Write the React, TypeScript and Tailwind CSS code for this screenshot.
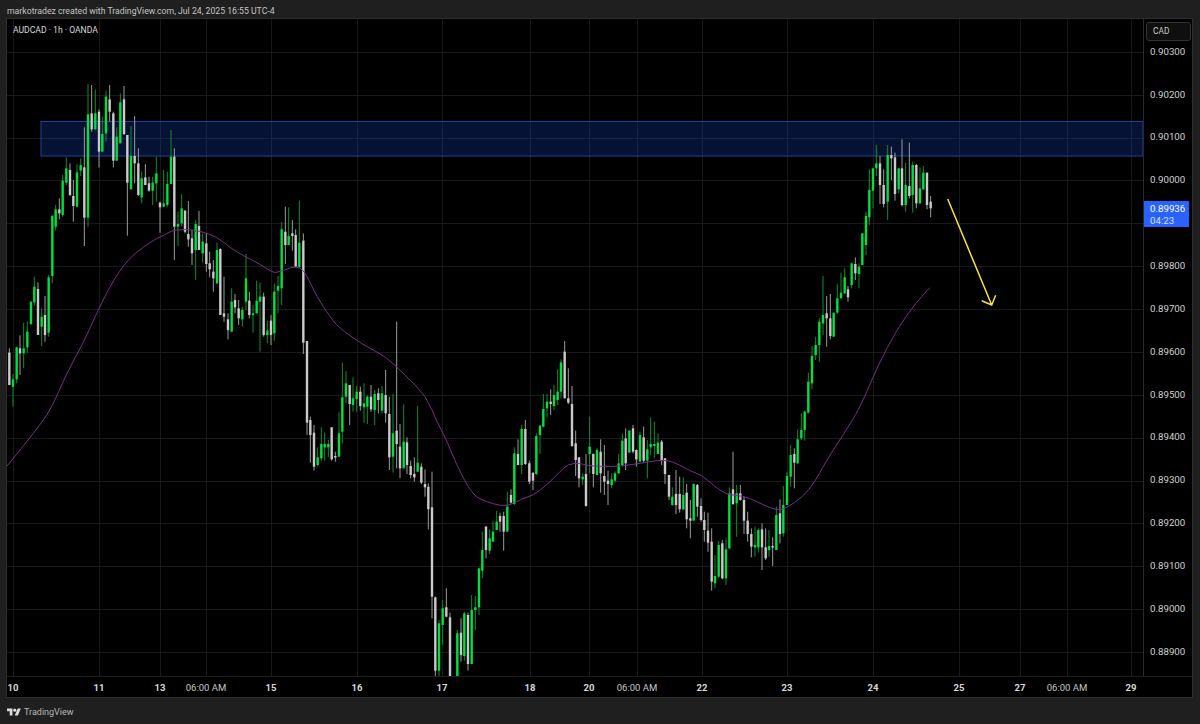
type Row = [number, number, number, number, number, number];

// candles read off the chart: x, green(1)/grey(0), high, body top, body bottom, low
// each block uses crop coordinates, scaled 3x from the given origin
const blocks: { ox: number; oy: number; rows: Row[] }[] = [
  {
    ox: 0,
    oy: 70,
    rows: [
      [28,0,835,848,945,945],[39,1,912,928,950,1010],[50,1,830,832,928,940],[60,0,796,835,850,915],[71,1,758,835,850,895],
      [82,1,755,785,832,850],[93,1,695,695,762,765],[103,1,620,650,697,707],[114,0,637,657,795,795],[125,1,715,740,770,828],
      [135,0,678,735,795,815],[146,1,615,622,788,800],[157,1,437,437,618,640],[167,1,405,418,470,482],[178,0,385,418,430,448],
      [188,1,315,332,435,440],[199,1,262,295,338,345],[210,0,280,300,375,378],[220,0,330,378,408,455],[231,1,283,307,410,410],
      [242,1,265,285,302,318],[253,0,172,292,443,528],[264,1,42,133,443,470],[275,0,45,130,178,185],[286,1,58,130,178,180],
      [297,0,118,125,245,292],[307,1,140,192,245,245],[318,1,62,80,190,215],[329,0,45,88,125,155],[340,0,125,130,272,292],
      [350,1,172,200,272,272],[361,1,70,97,220,220],[372,0,48,88,192,195],[382,0,195,195,338,497],[393,1,168,258,358,358],
      [404,0,138,258,280,340],[415,0,235,280,375,378],[425,1,305,325,382,400],[436,0,282,322,345,345],[447,0,320,340,362,365],
      [458,1,320,338,362,405],[469,1,260,310,340,395],[480,0,395,398,412,488],[491,1,300,400,410,410],[502,1,305,342,405,410],
      [513,1,180,260,342,342],[523,0,235,260,470,570],[534,1,425,462,470,528],[545,1,373,415,460,470],[555,0,420,422,485,490],
      [565,0,393,492,508,530],[576,0,480,505,550,585],[587,1,450,462,540,630],[597,0,423,468,540,540],[608,1,490,515,550,578],
      [619,0,490,520,582,605],[629,0,545,580,598,622],[640,0,570,605,625,665],[651,1,518,540,640,642],[661,0,535,537,735,735],
      [672,0,620,730,740,755],[684,0,730,748,780,808],[695,1,655,695,785,785],[705,0,672,690,712,730],[716,0,690,715,745,765],
      [727,1,710,720,748,770],[738,1,552,625,695,720],[748,0,665,692,735,745],[759,1,705,730,735,788],[770,1,632,692,730,730],
      [780,1,638,680,695,845],[791,0,668,680,795,800],[802,1,752,782,795,820],[813,0,735,752,795,825],[823,1,640,665,790,812],
      [834,1,618,648,662,730],[845,1,455,478,655,705],[856,0,410,485,525,582],[866,1,412,498,525,525],[877,0,450,490,498,542],
      [887,0,478,495,590,592],[898,1,392,518,592,592],[910,0,490,512,818,852],
    ],
  },
  {
    ox: 280,
    oy: 200,
    rows: [
      [81,0,423,423,668,705],[91,0,650,660,705,788],[102,0,675,698,800,812],[113,1,742,772,795,800],[124,1,682,732,775,782],
      [134,1,698,732,742,782],[145,1,720,732,742,772],[155,0,682,682,778,782],[166,0,755,768,772,785],[177,1,637,700,770,770],
      [187,1,488,592,695,730],[198,1,513,550,590,610],[209,0,555,555,612,675],[219,1,532,595,615,635],[230,1,558,575,597,635],
      [241,0,560,575,618,632],[252,1,550,610,622,668],[262,1,585,590,620,672],[273,0,555,590,628,635],[284,1,570,582,630,675],
      [295,0,565,580,600,640],[306,1,558,580,632,640],[317,0,510,585,640,668],[328,0,590,642,772,810],[339,1,582,700,770,818],
      [350,0,365,692,732,805],[360,0,672,740,805,835],[371,1,613,725,805,805],[381,0,712,727,795,822],[392,0,782,798,825,835],
      [403,0,772,822,832,845],[413,1,618,788,815,815],[424,0,790,800,848,852],[435,0,808,852,862,890],[445,0,850,860,928,988],
      [456,0,815,922,1190,1255],[466,0,1190,1192,1412,1428],[477,1,1260,1270,1412,1430],[488,1,1200,1225,1275,1335],[499,0,1165,1222,1250,1252],
      [510,0,1238,1252,1430,1430],[532,1,1290,1300,1430,1430],[543,0,1255,1298,1365,1385],[553,1,1235,1240,1368,1382],[564,0,1238,1245,1392,1412],
      [575,1,1185,1230,1392,1392],[586,1,1188,1222,1230,1290],[597,1,1105,1105,1222,1245],
    ],
  },
  {
    ox: 480,
    oy: 330,
    rows: [
      [7,1,605,660,722,745],[18,0,588,590,660,685],[29,1,598,625,662,672],[39,1,572,605,635,635],[50,1,542,575,600,600],
      [60,0,548,558,575,605],[71,0,545,558,605,662],[82,1,485,530,605,605],[93,0,478,495,518,520],[103,1,352,370,522,525],
      [114,0,328,372,405,405],[125,1,285,297,405,432],[136,0,270,297,402,405],[148,0,392,400,455,462],[159,0,428,428,452,480],
      [169,1,310,318,432,435],[180,1,285,287,315,372],[190,1,192,237,290,292],[201,1,192,215,235,262],[212,0,178,215,222,255],
      [222,1,165,195,228,240],[233,1,118,185,210,225],[243,1,88,97,185,205],[254,0,33,65,205,205],[265,0,115,205,218,222],
      [276,0,168,222,348,350],[287,0,302,340,390,438],[297,0,382,382,445,472],[308,1,430,440,448,465],[318,0,372,432,528,530],
      [329,1,260,350,372,430],[340,0,370,372,432,472],[351,1,355,360,435,435],[362,0,328,365,430,488],[373,0,345,438,455,495],
      [384,0,422,452,462,525],[395,1,430,448,465,475],[405,1,425,430,452,458],[416,1,372,400,430,432],[427,1,310,332,405,410],
      [437,0,295,325,400,420],[448,1,300,302,368,368],[459,0,285,295,365,370],[469,0,358,360,388,410],[480,1,305,315,395,395],
      [491,0,290,322,392,398],[502,1,330,358,392,445],[512,1,262,342,352,375],[523,1,275,342,348,385],[534,1,310,338,372,372],
      [545,0,330,335,390,405],[555,0,385,385,432,462],[567,0,435,435,500,510],[577,1,472,500,525,527],[588,0,420,492,525,552],
      [599,0,440,492,538,548],[610,1,442,495,538,540],[620,0,462,488,568,595],[631,0,510,565,572,625],[641,1,460,462,572,572],
      [652,0,462,465,530,560],[663,0,505,528,570,575],[673,0,545,570,600,635],[684,0,548,602,638,665],[695,0,595,635,755,782],
      [705,1,675,738,760,775],[716,1,632,645,740,745],[727,0,630,640,745,748],[738,1,625,658,745,765],[748,1,472,490,655,658],
      [759,0,365,478,522,525],[770,1,465,490,520,620],[781,0,465,490,510,512],[792,0,500,510,572,612],[803,0,545,572,612,635],
      [814,0,595,612,650,682],[825,1,590,645,652,680],[835,1,595,600,652,668],[846,0,580,598,652,720],[857,0,595,652,685,690],
      [867,1,600,648,660,680],[878,0,622,648,650,708],[889,1,530,555,660,660],[900,0,508,550,612,640],[910,1,468,525,610,620],
      [921,1,425,438,525,525],[932,1,345,375,440,470],[943,0,355,372,398,475],[953,1,298,328,400,402],
    ],
  },
  {
    ox: 760,
    oy: 220,
    rows: [
      [124,1,580,630,655,660],[134,1,572,575,630,662],[145,1,458,485,578,580],[156,1,378,408,490,508],[167,1,350,375,405,420],
      [178,1,295,305,375,425],[189,1,168,285,310,345],[200,0,228,280,295,380],[211,0,222,295,348,358],[221,1,278,278,350,350],
      [232,1,193,235,278,282],[243,1,158,218,235,235],[254,1,145,172,220,222],[264,0,198,208,232,245],[275,1,128,130,195,205],
      [286,0,112,132,160,180],[297,1,130,140,162,205],[307,1,40,40,135,135],
    ],
  },
  {
    ox: 860,
    oy: 130,
    rows: [
      [18,1,245,258,345,375],[28,1,118,180,262,285],[39,1,115,115,182,235],[49,1,45,100,115,138],[60,0,78,100,165,222],
      [71,0,118,165,222,232],[83,1,45,75,215,270],[94,0,50,75,85,150],[105,0,68,82,192,212],[116,1,115,115,178,190],
      [126,0,28,115,225,230],[137,1,98,165,225,245],[148,0,38,168,198,205],[158,1,95,105,195,248],[169,0,102,105,220,235],
      [180,1,112,175,220,222],[190,1,108,128,178,180],[201,0,128,128,225,238],[212,0,198,215,235,262],
    ],
  },
];

const maPoints: [number, number][] = [
  [7,466],[20,450],[36,430],[50.7,410],[66.7,373],[84,341.7],[95,316.7],[109,288],[122.7,266],[135,253],[155,239],[165,235],
  [171,230.7],[185,229],[200,231],[216.7,236.7],[230,247.7],[245,256.7],[260,264],[271.7,272],[277,272.7],[291.7,267],[300,267],
  [306.7,275],[316.7,296.7],[330,316.7],[338,327],[363,345],[385,355.7],[405,375],[426.7,396.7],[436.7,421.7],[445,436.7],
  [456.7,465],[468,486.7],[475,495.7],[480,499],[493,504],[508,506.7],[523,498],[533,495.7],[546.7,485],[560,471.7],[568,464],
  [580,463],[586.7,465.7],[613,467],[636.7,464],[665,459],[680,465],[690,471],[701.7,475],[713,485],[726.7,495],[743,495.7],
  [756.7,501.7],[775,510],[785,509],[803,496.7],[815,481.7],[825,463],[843,435],[860,408],[878,365],[896.7,330],[913,306.7],
  [925,292.7],[930,287.7],
];

// rounds the corners of the moving average
function smoothPath(pts: [number, number][]) {
  let d = `M${pts[0][0]} ${pts[0][1]}`;
  for (let i = 1; i < pts.length - 1; i++) {
    const mx = (pts[i][0] + pts[i + 1][0]) / 2;
    const my = (pts[i][1] + pts[i + 1][1]) / 2;
    d += `Q${pts[i][0]} ${pts[i][1]} ${mx} ${my}`;
  }
  const last = pts[pts.length - 1];
  return `${d}L${last[0]} ${last[1]}`;
}

const gridY = [52, 95, 138, 180, 223, 266, 309, 352, 395, 438, 481, 523, 566, 609, 652];
const gridX = [13, 99, 160, 206, 271, 357, 442, 530, 589, 637, 702, 787, 873, 959, 1020, 1067, 1131];

const prices = ["0.90300", "0.90200", "0.90100", "0.90000", "", "0.89800", "0.89700", "0.89600", "0.89500", "0.89400", "0.89300", "0.89200", "0.89100", "0.89000", "0.88900"];

const times = [
  { x: 13, t: "10", bold: true },
  { x: 99, t: "11", bold: true },
  { x: 160, t: "13", bold: true },
  { x: 206, t: "06:00 AM", bold: false },
  { x: 271, t: "15", bold: true },
  { x: 357, t: "16", bold: true },
  { x: 442, t: "17", bold: true },
  { x: 530, t: "18", bold: true },
  { x: 589, t: "20", bold: true },
  { x: 637, t: "06:00 AM", bold: false },
  { x: 702, t: "22", bold: true },
  { x: 787, t: "23", bold: true },
  { x: 873, t: "24", bold: true },
  { x: 959, t: "25", bold: true },
  { x: 1020, t: "27", bold: true },
  { x: 1067, t: "06:00 AM", bold: false },
  { x: 1131, t: "29", bold: true },
];

function Candles() {
  return (
    <>
      {blocks.flatMap((b) =>
        b.rows.map((r) => {
          const x = b.ox + r[0] / 3;
          const [hi, top, bot, lo] = [r[2], r[3], r[4], r[5]].map((v) => b.oy + v / 3);
          return (
            <g key={`${b.ox}-${r[0]}`}>
              <rect x={x - 0.5} y={hi} width={1} height={lo - hi} fill={r[1] ? "#0b8f2e" : "#9c9c9c"} />
              <rect x={x - 1.2} y={top} width={2.4} height={Math.max(bot - top, 1.5)} fill={r[1] ? "#00e040" : "#cacaca"} />
            </g>
          );
        })
      )}
    </>
  );
}

function ChartSvg() {
  return (
    <svg viewBox="7 19 1136 657" className="block w-[1136px] h-[657px] bg-black">
      {gridY.map((y) => (
        <line key={y} x1={7} x2={1143} y1={y + 0.5} y2={y + 0.5} stroke="#191919" />
      ))}
      {gridX.map((x) => (
        <line key={x} x1={x + 0.5} x2={x + 0.5} y1={19} y2={676} stroke="#191919" />
      ))}
      <rect x={41} y={121.5} width={1102} height={34.5} fill="#0f3aa8" fillOpacity={0.3} stroke="#1f429c" />
      <Candles />
      <path d={smoothPath(maPoints)} fill="none" stroke="#7a2d8c" strokeWidth={1} />
      <path d="M947.7 199L991.7 305M981.7 300.7L991.7 305L995.7 295.3" fill="none" stroke="#f5e43a" strokeWidth={1.5} />
    </svg>
  );
}

function TvLogo() {
  return (
    <svg viewBox="0 0 36 28" className="w-[14px] h-[11px]" fill="#dcdcdc">
      <path d="M14 22H7V11H0V4h14v18zM28 22h-8l7.5-18h8L28 22z" />
      <circle cx="20" cy="8" r="4" />
    </svg>
  );
}

export default function App() {
  return (
    <div className="w-[1200px] h-[724px] overflow-hidden bg-[#1f1f1f] text-[#d1d1d1] font-['Roboto',sans-serif]">
      <div className="h-[18px] pl-[7px] text-[8.7px] leading-[22px] text-[#c4c4c4] whitespace-nowrap">
        markotradez created with TradingView.com, Jul 24, 2025 16:55 UTC-4
      </div>

      <div className="ml-[6px] w-[1187px] h-[680px] border border-[#2e2e2e] bg-black">
        <div className="flex h-[657px]">
          <div className="relative w-[1136px]">
            <ChartSvg />
            <div className="absolute left-[6px] top-[4px] text-[8.6px] leading-[14px] text-[#d8d8d8]">AUDCAD · 1h · OANDA</div>
          </div>
          <div className="relative flex-1 border-l border-[#2a2a2a] pt-[11.5px]">
            {prices.map((p, i) => (
              <div key={i} className="h-[42.87px] flex items-center pl-[6px] text-[9.7px] text-[#d1d1d1]">
                {p}
              </div>
            ))}
            <div className="absolute left-[2px] top-[3px] w-[45px] h-[19px] rounded-[3px] border border-[#333] bg-[#0f0f0f] flex items-center pl-[6px] text-[8.4px] text-[#c8c8c8]">
              CAD
            </div>
            <div className="absolute left-0 top-[182px] w-[45px] h-[26px] bg-[#2962ff] pl-[6px] pt-[2px] text-[9.7px] leading-[12px] text-white">
              <div>0.89936</div>
              <div className="text-[#d5e0ff]">04:23</div>
            </div>
          </div>
        </div>
        <div className="relative h-[21px] border-t border-[#1e1e1e]">
          {times.map((t) => (
            <span
              key={`${t.x}`}
              className={`absolute top-[4px] -translate-x-1/2 text-[9.5px] whitespace-nowrap ${t.bold ? "font-bold text-[#d8d8d8]" : "text-[#c4c4c4]"}`}
              style={{ left: t.x - 7 }}
            >
              {t.t}
            </span>
          ))}
        </div>
      </div>

      <div className="flex items-center gap-[3px] pl-[7px] pt-[3px] h-[26px] text-[9px] text-[#b8b8b8]">
        <TvLogo />
        <span>TradingView</span>
      </div>
    </div>
  );
}
